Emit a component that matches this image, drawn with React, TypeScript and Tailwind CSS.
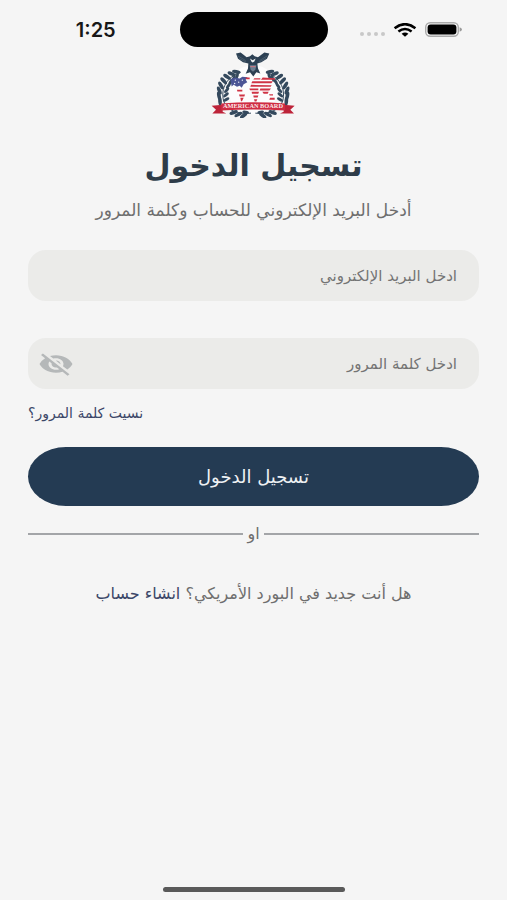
import { useState } from "react";
import { MdVisibility, MdVisibilityOff } from "react-icons/md";

/* Leaves of the left laurel branch: x, y, rotation. The right one is mirrored. */
const LEAVES = [
  [106, 82, -80],
  [92, 88, -68],
  [78, 97, -56],
  [68, 109, -44],
  [60, 123, -32],
  [55, 138, -22],
  [54, 154, -12],
  [57, 170, -4],
  [98, 204, 70],
  [112, 210, 62],
  [128, 213, 54],
];

const INNER_LEAVES = [
  [108, 95, 20],
  [98, 102, 24],
  [89, 112, 30],
  [82, 124, 36],
  [77, 137, 42],
  [75, 151, 50],
  [76, 165, 58],
  [134, 203, 100],
];

function Branch() {
  return (
    <g fill="#34495d">
      <path
        d="M118 84C78 98 58 130 68 170C78 198 110 210 150 206"
        fill="none"
        stroke="#34495d"
        strokeWidth="3"
      />
      {LEAVES.map(([x, y, r]) => (
        <ellipse key={`o-${y}`} cx={x} cy={y} rx="5.5" ry="13" transform={`rotate(${r} ${x} ${y})`} />
      ))}
      {INNER_LEAVES.map(([x, y, r]) => (
        <ellipse key={`i-${y}`} cx={x} cy={y} rx="4.5" ry="10" transform={`rotate(${r} ${x} ${y})`} />
      ))}
    </g>
  );
}

function Logo() {
  return (
    <svg viewBox="30 20 255 200" className="h-[67px] w-[85px]" role="img" aria-label="American Board">
      <circle cx="156" cy="136" r="74" fill="#fcfcfd" />
      <Branch />
      <g transform="translate(313 0) scale(-1 1)">
        <Branch />
      </g>

      {/* Map with flag stripes */}
      <path
        d="M88 104L102 99L116 102L124 97L140 98L134 106L139 113L128 119L122 130L116 124L108 127L98 121L92 126Z"
        fill="#4b5596"
      />
      <g fill="#fcfcfd">
        <circle cx="103" cy="107" r="2" />
        <circle cx="113" cy="113" r="2" />
        <circle cx="124" cy="107" r="2" />
        <circle cx="101" cy="117" r="2" />
      </g>
      <path
        d="M133 99H146V104H136ZM160 101H178V105H157ZM185 99L222 101V106H180ZM154 110H216L211 116H151ZM150 121L212 122L209 127H148ZM145 132H172V137H147ZM178 132H210L205 138H176ZM108 136H124V141H109ZM114 150H132L130 156H116ZM118 160H128L123 170H120ZM152 142H174L172 148H153ZM184 142H203L200 148H188ZM157 153H172L170 159H158ZM159 164H169L166 171H161ZM204 149H216V153H206ZM207 160H221V166H205Z"
        fill="#cf3345"
      />

      {/* Eagle */}
      <path
        d="M105 27L119 24L137 38L147 35L154 29L161 35L171 38L190 24L205 27L198 43L181 53L169 57L171 72L178 87L166 83L157 96L147 83L134 88L141 72L142 57L126 53L111 43Z"
        fill="#2c4053"
      />
      <path
        d="M110 34L134 48M114 42L136 53M199 34L176 48M195 42L173 53"
        stroke="#586a79"
        strokeWidth="2"
      />
      <path d="M147 42L155 47L164 42L160 51L155 54L151 51Z" fill="#f4f4f4" />
      <path d="M146 62H166L163 76L156 82L149 76Z" fill="#6d7f91" />
      <path d="M148 65H164V68H148Z" fill="#d57781" />

      {/* Ribbon */}
      <path d="M32 184L65 181V202L76 207H34L45 196ZM281 184L248 181V202L237 207H279L268 196Z" fill="#bd2339" />
      <path d="M61 177Q156 170 252 177V198Q156 192 61 198Z" fill="#cf2c42" />
      <text
        x="156"
        y="191"
        textAnchor="middle"
        fontSize="19"
        fontWeight="700"
        fill="#fbe9eb"
        className="font-['Liberation_Serif',serif]"
      >
        AMERICAN BOARD
      </text>
    </svg>
  );
}

function StatusBar() {
  return (
    <header dir="ltr" className="grid grid-cols-[1fr_148px_1fr] items-center pt-3">
      <time className="pl-3 text-center font-['Inter',sans-serif] text-xl leading-6 font-semibold text-[#171717]">
        1:25
      </time>
      <div className="h-[35px] rounded-full bg-black" />
      <div className="flex items-center gap-2 pl-8">
        <div className="flex gap-[3px] pt-2">
          <span className="size-1 rounded-full bg-[#c8c8c8]" />
          <span className="size-1 rounded-full bg-[#c8c8c8]" />
          <span className="size-1 rounded-full bg-[#c8c8c8]" />
          <span className="size-1 rounded-full bg-[#c8c8c8]" />
        </div>
        <svg viewBox="0 0 24 14" className="h-[14px] w-6" fill="none" stroke="#000" strokeWidth="2.6">
          <path d="M1.6 5.2Q12-2.8 22.4 5.2" />
          <path d="M5.4 8.5Q12 3.5 18.6 8.5" />
          <path d="M8.6 10.7Q12 8.3 15.4 10.7L12 13.8Z" fill="#000" stroke="none" />
        </svg>
        <svg viewBox="0 0 37 15" className="h-[15px] w-[37px]">
          <rect x="0.7" y="0.7" width="32.6" height="13.6" rx="4.5" fill="none" stroke="#aaa" strokeWidth="1.4" />
          <rect x="2.6" y="2.6" width="28.8" height="9.8" rx="3" fill="#000" />
          <path d="M34.6 5.2Q37 6 37 7.5T34.6 9.8Z" fill="#999" />
        </svg>
      </div>
    </header>
  );
}

const FIELD =
  "h-[51px] w-full rounded-[18px] bg-[#ebebe9] px-[22px] text-[15px] text-[#5f5f5f] outline-none placeholder:text-[#747474]";

export default function App() {
  const [showPassword, setShowPassword] = useState(false);

  return (
    <div
      dir="rtl"
      lang="ar"
      className="flex min-h-screen flex-col bg-[#f5f5f5] font-['DejaVu_Sans',sans-serif] text-[#6e6e6e]"
    >
      <StatusBar />

      <main className="flex flex-1 flex-col px-7 pt-1">
        <div className="flex justify-center">
          <Logo />
        </div>

        <h1 className="mt-7 text-center text-3xl leading-10 font-bold text-[#2e3c49]">تسجيل الدخول</h1>
        <p className="mt-3 text-center text-[17px] leading-6">أدخل البريد الإلكتروني للحساب وكلمة المرور</p>

        <form className="mt-7 flex flex-col" onSubmit={(e) => e.preventDefault()}>
          <input
            type="email"
            dir="rtl"
            aria-label="البريد الإلكتروني"
            placeholder="ادخل البريد الإلكتروني"
            className={FIELD}
          />

          <div className="relative mt-[37px]">
            <input
              type={showPassword ? "text" : "password"}
              aria-label="كلمة المرور"
              placeholder="ادخل كلمة المرور"
              className={FIELD}
            />
            <button
              type="button"
              aria-label="إظهار كلمة المرور"
              onClick={() => setShowPassword(!showPassword)}
              className="absolute inset-y-0 left-2.5 flex items-center text-[#b5b8b9]"
            >
              {showPassword ? (
                <MdVisibility preserveAspectRatio="none" className="h-7 w-9" />
              ) : (
                <MdVisibilityOff preserveAspectRatio="none" className="h-7 w-9" />
              )}
            </button>
          </div>

          <a href="#forgot" className="mt-3 self-end text-sm leading-6 text-[#3c4768]">
            نسيت كلمة المرور؟
          </a>

          <button
            type="submit"
            className="mt-[22px] h-[59px] rounded-[38px/50%] bg-[#243b53] text-lg text-[#eef1f4]"
          >
            تسجيل الدخول
          </button>
        </form>

        <div className="mt-4 flex items-center gap-1 text-base leading-6">
          <span className="h-0.5 flex-1 bg-[#a3a5a8]" />
          <span>او</span>
          <span className="h-0.5 flex-1 bg-[#a3a5a8]" />
        </div>

        <p className="mt-9 text-center text-base leading-6">
          هل أنت جديد في البورد الأمريكي؟{" "}
          <a href="#register" className="text-[#3c4768]">
            انشاء حساب
          </a>
        </p>
      </main>

      <footer className="flex justify-center pb-2">
        <div className="h-[5px] w-[182px] rounded-full bg-[#5a5a5a]" />
      </footer>
    </div>
  );
}
